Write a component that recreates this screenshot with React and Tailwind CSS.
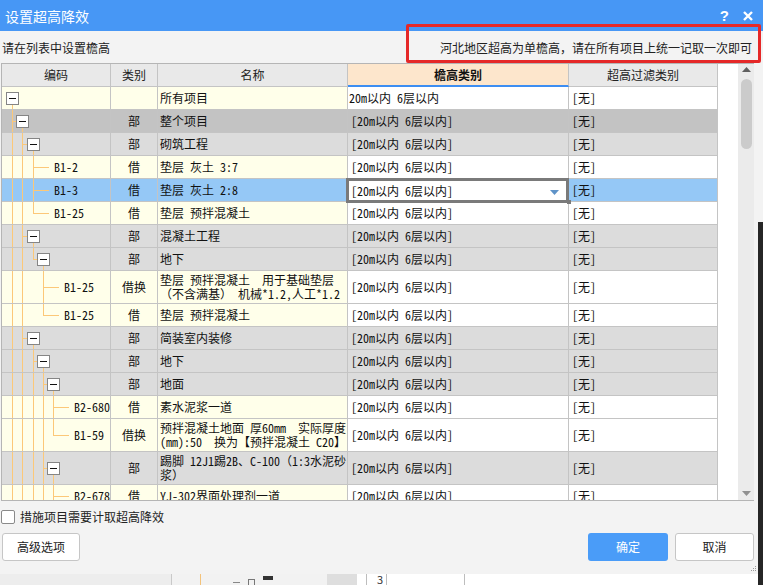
import React from 'react';

const LC = '#fcc878';
const C = [10, 20, 31, 41, 51, 61];

const rows = [
  { kind: 'root', L: 0, cat: '', name: ['所有项目'], full: [], hl: null, box: true },
  { kind: 'g1', L: 1, cat: '部', name: ['整个项目'], full: [0], box: true },
  { kind: 'g', L: 2, cat: '部', name: ['砌筑工程'], full: [0, 1], box: true },
  { kind: 'leaf', P: 2, code: 'B1-2', cat: '借', name: ['垫层 灰土 3:7'], full: [0, 1, 2] },
  { kind: 'sel', P: 2, code: 'B1-3', cat: '借', name: ['垫层 灰土 2:8'], full: [0, 1, 2] },
  { kind: 'leaf', P: 2, code: 'B1-25', cat: '借', name: ['垫层 预拌混凝土'], full: [0, 1], half: [2] },
  { kind: 'g', L: 2, cat: '部', name: ['混凝土工程'], full: [0, 1], box: true },
  { kind: 'g', L: 3, cat: '部', name: ['地下'], full: [0, 1], half: [2], box: true },
  { kind: 'leaf', P: 3, tall: true, code: 'B1-25', cat: '借换', name: ['垫层 预拌混凝土  用于基础垫层', '（不含满基） 机械*1.2,人工*1.2'], full: [0, 1, 3] },
  { kind: 'leaf', P: 3, code: 'B1-25', cat: '借', name: ['垫层 预拌混凝土'], full: [0, 1], half: [3] },
  { kind: 'g', L: 2, cat: '部', name: ['简装室内装修'], full: [0, 1], box: true },
  { kind: 'g', L: 3, cat: '部', name: ['地下'], full: [0, 1, 2], box: true },
  { kind: 'g', L: 4, cat: '部', name: ['地面'], full: [0, 1, 2, 3], box: true },
  { kind: 'leaf', P: 4, code: 'B2-680', cat: '借', name: ['素水泥浆一道'], full: [0, 1, 2, 3, 4] },
  { kind: 'leaf', P: 4, tall: true, code: 'B1-59', cat: '借换', name: ['预拌混凝土地面 厚60mm  实际厚度', '(mm):50  换为【预拌混凝土 C20】'], full: [0, 1, 2, 3], half: [4] },
  { kind: 'g', L: 4, tall: true, cat: '部', name: ['踢脚 12J1踢2B、C-100（1:3水泥砂', '浆）'], full: [0, 1, 2, 3], box: true },
  { kind: 'leaf', P: 4, code: 'B2-678', cat: '借', name: ['YJ-302界面处理剂一道'], full: [0, 1, 2, 3, 4] },
];

const leftBg = {
  root: 'bg-[#ffffea]',
  leaf: 'bg-[#ffffea]',
  g1: 'bg-[#c3c3c3]',
  g: 'bg-[#dcdcdc]',
  sel: 'bg-[#95c8f6]',
};
const rightBg = {
  root: 'bg-white',
  leaf: 'bg-white',
  g1: 'bg-[#c3c3c3]',
  g: 'bg-[#dcdcdc]',
  sel: 'bg-[#95c8f6]',
};
const codePad = { 2: 'pl-[52px]', 3: 'pl-[62px]', 4: 'pl-[72px]' };

const MONO = { fontFamily: '"Noto Sans Mono CJK SC", "Noto Sans CJK SC", monospace' };
const cellB = 'border-r border-b border-[#c4c4c4]';

function TreeSvg({ r }) {
  const h = r.tall ? 32 : 22;
  const mid = Math.floor(h / 2);
  const els = [];
  (r.full || []).forEach((i) => {
    els.push(<line key={'f' + i} x1={C[i] + 0.5} x2={C[i] + 0.5} y1={0} y2={h} stroke={LC} />);
  });
  (r.half || []).forEach((i) => {
    els.push(<line key={'h' + i} x1={C[i] + 0.5} x2={C[i] + 0.5} y1={0} y2={mid + 0.5} stroke={LC} />);
  });
  if (r.box) {
    const L = r.L;
    if (L > 0) {
      els.push(<line key="hl" x1={C[L - 1]} x2={C[L] - 6} y1={mid + 0.5} y2={mid + 0.5} stroke={LC} />);
    }
    els.push(<line key="down" x1={C[L] + 0.5} x2={C[L] + 0.5} y1={mid + 6} y2={h} stroke={LC} />);
    els.push(<rect key="box" x={C[L] - 6 + 0.5} y={mid - 6 + 0.5} width={12} height={12} fill="#fff" stroke="#858585" />);
    els.push(<line key="minus" x1={C[L] - 3} x2={C[L] + 4} y1={mid + 0.5} y2={mid + 0.5} stroke="#111" />);
  } else {
    const P = r.P;
    els.push(<line key="hl" x1={C[P]} x2={C[P] + 16} y1={mid + 0.5} y2={mid + 0.5} stroke={LC} />);
  }
  return (
    <svg className="absolute left-0 top-0" width="108" height={h}>
      {els}
    </svg>
  );
}

function Row({ r }) {
  const hc = r.tall ? 'h-[33px]' : 'h-[23px]';
  const lb = leftBg[r.kind];
  const rb = rightBg[r.kind];
  const eh = r.kind === 'root' ? '20m以内 6层以内' : '[20m以内 6层以内]';
  return (
    <div className="flex text-[12px] text-[#111]" style={MONO}>
      <div className={`relative w-[109px] ${hc} ${cellB} ${lb} flex items-center ${r.code ? codePad[r.P] : ''}`}>
        <TreeSvg r={r} />
        {r.code ? <span className="relative whitespace-pre leading-none">{r.code}</span> : null}
      </div>
      <div className={`w-[47px] ${hc} ${cellB} ${lb} flex items-center justify-center leading-none`}>{r.cat}</div>
      <div className={`w-[190px] ${hc} ${cellB} ${lb} flex flex-col justify-center pl-[2px] overflow-hidden`}>
        {r.name.map((t, i) => (
          <div key={i} className={`whitespace-pre ${r.tall ? 'leading-[14px]' : 'leading-none'}`}>{t}</div>
        ))}
      </div>
      {r.kind === 'sel' ? (
        <div className={`relative w-[221px] ${hc} border-r border-b border-[#c4c4c4] bg-white`}>
          <div className="absolute left-[-2px] top-[-1px] right-[-1px] bottom-[-2px] border-[3px] border-[#7a7a7a] bg-white flex items-center pl-[2px]">
            <span className="leading-none">[20m以内 6层以内]</span>
            <svg className="absolute right-[7px] top-[9px]" width="9" height="5">
              <polygon points="0,0 9,0 4.5,5" fill="#5f93c8" />
            </svg>
          </div>
          <div className="absolute right-[-3px] bottom-[-3px] w-[4px] h-[4px] bg-[#7a7a7a]"></div>
        </div>
      ) : (
        <div className={`w-[221px] ${hc} ${cellB} ${rb} flex items-center ${r.kind === 'root' ? 'pl-[1px]' : 'pl-[3px]'} leading-none`}>
          {eh}
        </div>
      )}
      <div className={`w-[149px] ${hc} ${cellB} ${rb} flex items-center pl-[3px] leading-none`}>[无]</div>
    </div>
  );
}

export default function App() {
  const UI = { fontFamily: '"Noto Sans CJK SC", "Microsoft YaHei", sans-serif' };
  return (
    <div className="relative w-[763px] h-[585px] overflow-hidden bg-[#ececec]" style={UI}>
      {/* dialog */}
      <div className="w-[763px] h-[574px] bg-[#f3f3f3] flex flex-col shadow-[0_2px_4px_rgba(0,0,0,0.15)]">
        {/* title bar */}
        <div className="h-[31px] bg-[#4797f5] flex items-center justify-between pl-[5px] pr-[10px] text-white">
          <span className="text-[14px] leading-none pt-[1px]">设置超高降效</span>
          <div className="flex items-center gap-[14px]">
            <span className="text-[15px] font-bold leading-none" style={{ fontFamily: '"Liberation Sans", sans-serif' }}>?</span>
            <svg width="10" height="10" viewBox="0 0 10 10">
              <path d="M1 1 L9 9 M9 1 L1 9" stroke="#fff" strokeWidth="2.4" />
            </svg>
          </div>
        </div>
        {/* sub header */}
        <div className="h-[32px] flex items-center justify-between pl-[2px] pr-[11px] text-[12px] text-[#222] pt-[2px]">
          <span>请在列表中设置檐高</span>
          <span>河北地区超高为单檐高，请在所有项目上统一记取一次即可</span>
        </div>
        {/* table */}
        <div className="ml-px w-[753px] h-[438px] flex border-l border-t border-b border-[#b5b5b5] bg-white">
          <div className="w-[737px] flex flex-col">
            <div className="flex h-[23px] text-[12px] text-[#222]">
              <div className={`w-[109px] ${cellB} bg-[#e9e9e9] flex items-center justify-center`}>编码</div>
              <div className={`w-[47px] ${cellB} bg-[#e9e9e9] flex items-center justify-center`}>类别</div>
              <div className={`w-[190px] ${cellB} bg-[#e9e9e9] flex items-center justify-center`}>名称</div>
              <div className="w-[221px] border-r border-[#c4c4c4] border-b-2 border-b-[#3d8ef2] bg-[#fde6cc] flex items-center justify-center font-bold text-[#111]">檐高类别</div>
              <div className={`w-[149px] ${cellB} bg-[#e9e9e9] flex items-center justify-center`}>超高过滤类别</div>
            </div>
            <div className="flex-1 overflow-hidden">
              {rows.map((r, i) => (
                <Row key={i} r={r} />
              ))}
            </div>
          </div>
          {/* scrollbar */}
          <div className="w-[16px] bg-[#ebebeb] flex flex-col items-center">
            <svg className="mt-[3px]" width="9" height="6"><polygon points="0,5 9,5 4.5,0" fill="#606060" /></svg>
            <div className="mt-[6px] w-[11px] h-[70px] rounded-[6px] bg-[#cbcbcb]"></div>
            <div className="flex-1"></div>
            <svg className="mb-[3px]" width="9" height="6"><polygon points="0,0 9,0 4.5,5" fill="#909090" /></svg>
          </div>
        </div>
        {/* checkbox row */}
        <div className="h-[21px] flex items-center gap-[5px] pl-px mt-[5px] text-[12px] text-[#222]">
          <div className="w-[14px] h-[14px] border border-[#8a8a8a] rounded-[2px] bg-white"></div>
          <span>措施项目需要计取超高降效</span>
        </div>
        {/* buttons */}
        <div className="mt-[6px] flex items-center justify-between pl-[2px] pr-[9px]">
          <button className="w-[78px] h-[28px] bg-white border border-[#c6c6c6] rounded-[3px] text-[12px] text-[#222]">高级选项</button>
          <div className="flex gap-[7px]">
            <button className="w-[80px] h-[28px] bg-[#4a9cf8] rounded-[3px] text-[12px] text-white">确定</button>
            <button className="w-[79px] h-[28px] bg-white border border-[#c6c6c6] rounded-[3px] text-[12px] text-[#222]">取消</button>
          </div>
        </div>
        <div className="flex-1 flex justify-end items-end pr-[6px] pb-[2px]">
          <svg width="6" height="6"><g fill="#9a9a9a"><rect x="4" y="0" width="1" height="1" /><rect x="2" y="2" width="1" height="1" /><rect x="4" y="2" width="1" height="1" /><rect x="0" y="4" width="1" height="1" /><rect x="2" y="4" width="1" height="1" /><rect x="4" y="4" width="1" height="1" /></g></svg>
        </div>
      </div>
      {/* background app strip */}
      <div className="flex h-[11px] text-[11px] text-[#333]">
        <div className="w-[172px] bg-[#ededed] border-r border-[#c9c9c9]"></div>
        <div className="w-[29px] bg-[#f2f2f2] border-r border-[#f3c27a]"></div>
        <div className="w-[126px] bg-[#f2f2f2] flex items-end gap-[8px] pl-[32px]">
          <div className="w-[7px] h-[1px] bg-[#888] mb-[2px]"></div>
          <div className="w-[7px] h-[6px] border border-[#777] border-b-0"></div>
          <div className="w-[10px] h-[4px] bg-[#333] mt-[2px] self-start"></div>
        </div>
        <div className="w-[30px] bg-[#dedede]"></div>
        <div className="w-[10px] bg-white border-r border-[#bdbdbd]"></div>
        <div className="w-[20px] bg-white border-r border-[#bdbdbd] pl-[10px] leading-[11px]">3</div>
        <div className="w-[78px] bg-white border-r border-[#bdbdbd]"></div>
        <div className="flex-1 bg-white"></div>
      </div>
      {/* annotation box */}
      <div className="absolute left-[406px] top-[24px] w-[355px] h-[39px] border-[3px] border-[#e52828] rounded-[2px]"></div>
      {/* dark edge of window behind / screen */}
      <div className="absolute left-[758px] top-[222px] bottom-0 w-[5px] bg-[#262626]"></div>
    </div>
  );
}
